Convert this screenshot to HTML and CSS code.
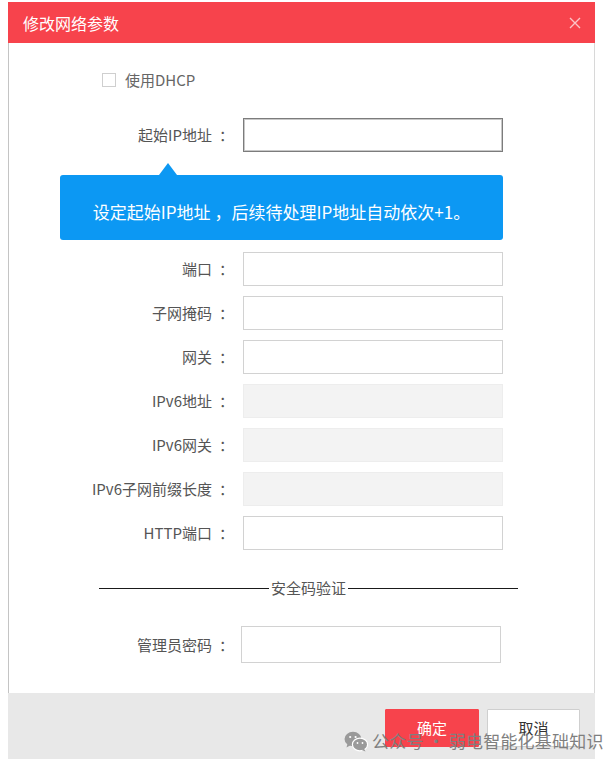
FILE: index.html
```html
<!DOCTYPE html>
<html lang="zh-CN">
<head>
<meta charset="utf-8">
<title>修改网络参数</title>
<link rel="stylesheet" href="styles.css">
</head>
<body>
<div class="dialog">
  <div class="header">
    <span class="title">修改网络参数</span>
    <span class="close">
      <svg width="12" height="12" viewBox="0 0 12 12"><path d="M1 1 L11 11 M11 1 L1 11" stroke="#fbc4c7" stroke-width="1.4" fill="none"/></svg>
    </span>
  </div>
  <div class="body">
    <div class="dhcp"><span class="checkbox"></span><span class="dhcp-text">使用DHCP</span></div>
    <div class="row first"><span class="lbl">起始IP地址<span class="colon">：</span></span><span class="input focused"></span></div>
    <div class="tip">设定起始IP地址<span class="comma">，</span>后续待处理IP地址自动依次+1。</div>
    <div class="rows">
      <div class="row"><span class="lbl">端口<span class="colon">：</span></span><span class="input"></span></div>
      <div class="row"><span class="lbl">子网掩码<span class="colon">：</span></span><span class="input"></span></div>
      <div class="row"><span class="lbl">网关<span class="colon">：</span></span><span class="input"></span></div>
      <div class="row"><span class="lbl">IPv6地址<span class="colon">：</span></span><span class="input disabled"></span></div>
      <div class="row"><span class="lbl">IPv6网关<span class="colon">：</span></span><span class="input disabled"></span></div>
      <div class="row"><span class="lbl">IPv6子网前缀长度<span class="colon">：</span></span><span class="input disabled"></span></div>
      <div class="row"><span class="lbl">HTTP端口<span class="colon">：</span></span><span class="input"></span></div>
    </div>
    <div class="divider"><span class="line"></span><span class="dtext">安全码验证</span><span class="line"></span></div>
    <div class="row pwd"><span class="lbl">管理员密码<span class="colon">：</span></span><span class="input tall"></span></div>
  </div>
  <div class="footer">
    <button class="btn ok">确定</button>
    <button class="btn cancel">取消</button>
  </div>
</div>
<div class="watermark">
  <svg class="wx" width="24" height="21" viewBox="0 0 24 21">
    <ellipse cx="9" cy="8" rx="8.5" ry="7.2" fill="#9a9a9a"/>
    <path d="M3.5 12.5 L2.5 16.5 L7 14" fill="#9a9a9a"/>
    <ellipse cx="16" cy="13.5" rx="7.6" ry="6.4" fill="#9a9a9a" stroke="#ffffff" stroke-width="1.2"/>
    <path d="M20 17.5 L21.5 20.5 L17.5 19" fill="#9a9a9a"/>
    <circle cx="6.2" cy="6" r="1.1" fill="#fff"/>
    <circle cx="11.6" cy="6" r="1.1" fill="#fff"/>
    <circle cx="13.5" cy="12" r="0.9" fill="#fff"/>
    <circle cx="18.5" cy="12" r="0.9" fill="#fff"/>
  </svg>
  <span class="wm-text">公众号 · 弱电智能化基础知识</span>
</div>
</body>
</html>
```

FILE: styles.css
```css
html, body {
  margin: 0;
  padding: 0;
  background: #ffffff;
}
body {
  font-family: "Noto Sans CJK SC", "Noto Sans", sans-serif;
  position: relative;
  width: 608px;
  height: 764px;
  overflow: hidden;
}
.dialog {
  margin: 2px 0 0 8px;
  width: 587px;
}
.header {
  height: 41px;
  background: #f7434c;
  display: flex;
  align-items: center;
  justify-content: space-between;
  padding: 0 14px 0 15px;
}
.title {
  color: #ffffff;
  font-size: 16px;
  line-height: 20px;
}
.close {
  display: flex;
  width: 12px;
  height: 12px;
}
.body {
  background: #ffffff;
  border-left: 1px solid #c4c4c4;
  border-right: 1px solid #d8d8d8;
  padding: 27px 0 30px;
  display: flex;
  flex-direction: column;
}
.dhcp {
  display: flex;
  align-items: center;
  height: 20px;
  padding-left: 93px;
}
.checkbox {
  width: 12px;
  height: 12px;
  border: 1px solid #cfcfcf;
  background: #fff;
}
.dhcp-text {
  margin-left: 9px;
  font-size: 15px;
  line-height: 20px;
  color: #666;
}
.row {
  display: flex;
  align-items: center;
  height: 34px;
}
.row.first {
  margin-top: 28px;
}
.lbl {
  width: 218px;
  text-align: right;
  font-size: 15px;
  line-height: 20px;
  color: #555;
  margin-right: 16px;
  white-space: nowrap;
}
.colon {
  display: inline-block;
  width: 15px;
  padding-left: 7px;
  box-sizing: border-box;
}
.input {
  display: block;
  box-sizing: border-box;
  width: 260px;
  height: 34px;
  border: 1px solid #d2d2d2;
  background: #fff;
}
.input.focused {
  border: 1px solid #7c7c7c;
  box-shadow: inset 0 0 0 1px #c8c8c8;
}
.input.disabled {
  background: #f3f3f3;
  border-color: #ededed;
}
.tip {
  position: relative;
  margin: 23px 0 0 51px;
  width: 443px;
  box-sizing: border-box;
  background: #0c98f3;
  border-radius: 3px;
  color: #ffffff;
  font-size: 17px;
  line-height: 21px;
  text-align: center;
  padding: 26px 0 18px;
}
.comma {
  display: inline-block;
  padding-left: 4px;
}
.tip::before {
  content: "";
  position: absolute;
  left: 99px;
  top: -12px;
  border-left: 9px solid transparent;
  border-right: 9px solid transparent;
  border-bottom: 12px solid #0c98f3;
}
.rows {
  margin-top: 12px;
  display: flex;
  flex-direction: column;
  gap: 10px;
}
.divider {
  margin: 28px 0 0 90px;
  width: 419px;
  height: 20px;
  display: flex;
  align-items: center;
}
.line {
  flex: 1;
  height: 1px;
  background: #1a1a1a;
}
.dtext {
  font-size: 15px;
  line-height: 20px;
  color: #555;
  padding: 0 2px;
}
.row.pwd {
  margin-top: 28px;
  height: 37px;
}
.row.pwd .lbl {
  margin-right: 14px;
}
.input.tall {
  height: 37px;
}
.footer {
  height: 66px;
  box-sizing: border-box;
  background: #e8e8e8;
  display: flex;
  justify-content: flex-end;
  align-items: flex-start;
  gap: 8px;
  padding: 16px 15px 0 0;
}
.btn {
  font-family: "Noto Sans CJK SC", "Noto Sans", sans-serif;
  font-size: 15px;
  line-height: 20px;
  height: 38px;
  padding: 0;
  border-radius: 1px;
  cursor: pointer;
}
.btn.ok {
  width: 94px;
  background: #f7434c;
  border: 1px solid #f7434c;
  color: #ffffff;
}
.btn.cancel {
  width: 93px;
  background: #ffffff;
  border: 1px solid #cfcfcf;
  color: #333;
}
.watermark {
  position: absolute;
  left: 344px;
  top: 730px;
  display: flex;
  align-items: center;
  gap: 4px;
}
.wm-text {
  font-size: 17px;
  line-height: 22px;
  color: #7f7f7f;
  white-space: nowrap;
  letter-spacing: 0.2px;
}
```
